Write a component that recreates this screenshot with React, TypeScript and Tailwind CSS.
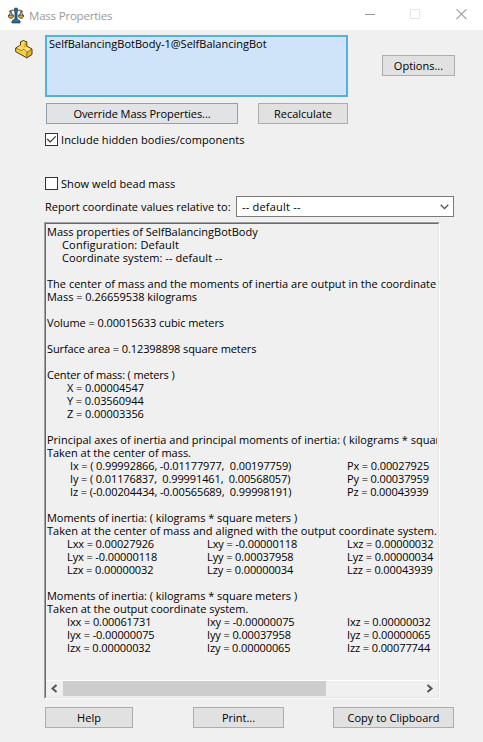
import type { ReactNode } from "react";

type Line = { text: string; style?: string };

const summary: Line[] = [
  { text: "Mass properties of SelfBalancingBotBody" },
  { text: "Configuration: Default", style: "pl-[15px] tracking-[0.17px]" },
  { text: "Coordinate system: -- default --", style: "pl-[15px] tracking-[0.07px]" },
  { text: "" },
  { text: "The center of mass and the moments of inertia are output in the coordinate system", style: "tracking-[0.015px]" },
  { text: "Mass = 0.26659538 kilograms", style: "tracking-[-0.03px]" },
  { text: "" },
  { text: "Volume = 0.00015633 cubic meters", style: "tracking-[-0.07px]" },
  { text: "" },
  { text: "Surface area = 0.12398898 square meters", style: "tracking-[-0.1px]" },
  { text: "" },
  { text: "Center of mass: ( meters )", style: "tracking-[-0.15px]" },
  { text: "X = 0.00004547", style: "pl-5 tracking-[-0.07px]" },
  { text: "Y = 0.03560944", style: "pl-5 tracking-[-0.07px]" },
  { text: "Z = 0.00003356", style: "pl-5 tracking-[-0.07px]" },
  { text: "" },
  { text: "Principal axes of inertia and principal moments of inertia: ( kilograms * square meters )" },
  { text: "Taken at the center of mass.", style: "tracking-[-0.03px]" },
];

const principal = [
  ["Ix = ( 0.99992866, -0.01177977,  0.00197759)", "Px = 0.00027925"],
  ["Iy = ( 0.01176837,  0.99991461,  0.00568057)", "Py = 0.00037959"],
  ["Iz = (-0.00204434, -0.00565689,  0.99998191)", "Pz = 0.00043939"],
];

const centerMoments = [
  ["Lxx = 0.00027926", "Lxy = -0.00000118", "Lxz = 0.00000032"],
  ["Lyx = -0.00000118", "Lyy = 0.00037958", "Lyz = 0.00000034"],
  ["Lzx = 0.00000032", "Lzy = 0.00000034", "Lzz = 0.00043939"],
];

const outputMoments = [
  ["Ixx = 0.00061731", "Ixy = -0.00000075", "Ixz = 0.00000032"],
  ["Iyx = -0.00000075", "Iyy = 0.00037958", "Iyz = 0.00000065"],
  ["Izx = 0.00000032", "Izy = 0.00000065", "Izz = 0.00077744"],
];

function TextLine({ text, style = "" }: Line) {
  return <div className={`h-[13px] whitespace-pre ${style}`}>{text}</div>;
}

function Matrix({ rows }: { rows: string[][] }) {
  return (
    <div className="grid grid-cols-[140px_140px_140px] pl-5 tracking-[-0.11px]">
      {rows.flat().map((cell) => (
        <div key={cell} className="h-[13px] whitespace-pre">{cell}</div>
      ))}
    </div>
  );
}

function Button({ children, className }: { children: ReactNode; className: string }) {
  return (
    <button className={`flex h-[21px] shrink-0 items-center justify-center border whitespace-pre ${className}`}>
      {children}
    </button>
  );
}

function CheckBox({ label, checked = false }: { label: string; checked?: boolean }) {
  return (
    <label className="flex h-[13px] items-center gap-[3px]">
      <span className="size-[13px] shrink-0 border border-[#333] bg-white">
        {checked && (
          <svg viewBox="0 0 11 11" className="block size-[11px]">
            <path d="M1.2 5 4.2 8 9.8 2.4" fill="none" stroke="#333" strokeWidth="1.2" />
          </svg>
        )}
      </span>
      <span className="tracking-[0.06px] whitespace-pre">{label}</span>
    </label>
  );
}

function ScaleIcon() {
  return (
    <svg viewBox="0 0 16 17" className="h-[17px] w-4 shrink-0">
      <path d="M1 4.5 3.3 3.4 8 3l4.7.4L15 4.5M2.8 4 1 9.5M2.8 4l2 5.5M13.2 4l-2 5.5M13.2 4l2 5.5" fill="none" stroke="#3b3a35" strokeWidth=".9" />
      <path d="M.5 8h5v1.9L4 11.2H1.8L.5 9.9ZM10.5 8h5v1.9l-1.3 1.3H12l-1.5-1.3Z" fill="#dda339" stroke="#443620" strokeWidth=".8" />
      <path d="M6.7 1.2h2.6v3L9 6v6l3 2v1.9H4V14l3-2V6l-.3-1.8Z" fill="#2b6e99" stroke="#123d57" strokeWidth=".8" />
    </svg>
  );
}

function PartIcon() {
  return (
    <svg viewBox="0 0 18 19" className="block h-[19px] w-[18px]">
      <path d="M.7 8 5.5 5V1.8L8.2.6l3.6 1.2v4.4L17 9v5.5l-5.2 3.4L.7 11.6Z" fill="#f9cf3a" />
      <path d="M5.5 1.8 8.2.6l3.6 1.2L9 3.1ZM.7 8l4.8-3v2.6L9 9.2l2.8-3L17 9l-5.2 3.2Z" fill="#ffe27a" />
      <path d="M5.5 1.8 9 3.1v6L5.5 7.6Z" fill="#fbd549" />
      <path d="m9 3.1 2.8-1.3v4.4L9 7.8ZM11.8 12.2 17 9v5.5l-5.2 3.4Z" fill="#e6b32a" />
      <path d="M.7 8 5.5 5V1.8L8.2.6l3.6 1.2v4.4L17 9v5.5l-5.2 3.4L.7 11.6Z" fill="none" stroke="#4b3b0c" strokeLinejoin="round" />
      <path d="m.7 8 5.8 2.6 2.5-1.5 2.8 3.1L17 9M11.8 12.2v5.7" fill="none" stroke="#6b5414" strokeWidth=".7" />
    </svg>
  );
}

export default function App() {
  return (
    <main className="flex h-[742px] w-[483px] flex-col bg-[#f0f0f0] font-['Open_Sans','Noto_Sans',sans-serif] text-[11px] leading-[13px] text-black">
      <header className="flex h-[30px] shrink-0 items-center bg-white pl-2">
        <ScaleIcon />
        <h1 className="ml-[5px] text-[11.5px] tracking-[-0.2px] text-[#999]">Mass Properties</h1>
        <svg viewBox="0 0 103 12" className="mr-[15px] ml-auto h-3 w-[103px]" fill="none">
          <path d="M0 5.5h10" stroke="#999" />
          <path d="M45.5.5h9v9h-9z" stroke="#e5e5e5" />
          <path d="m91.5.2 10 10m0-10-10 10" stroke="#999" strokeWidth="1.1" />
        </svg>
      </header>

      <section className="flex pt-[5px] pl-[15px]">
        <div className="w-[30px] pt-[5px]">
          <PartIcon />
        </div>
        <div className="w-[303px]">
          <div className="h-[62px] border-2 border-[#55b0e2] bg-[#cfe4f9] pl-[2px] whitespace-pre">
            SelfBalancingBotBody-1@SelfBalancingBot
          </div>
          <div className="mt-[6px] flex justify-between pl-px">
            <Button className="w-[192px] border-[#8fa1b0] bg-[#e1e3e6] tracking-[-0.07px]">Override Mass Properties...</Button>
            <Button className="w-[90px] border-[#adadad] bg-[#e1e1e1]">Recalculate</Button>
          </div>
        </div>
        <div className="pt-5 pl-[34px]">
          <Button className="w-[73px] border-[#adadad] bg-[#e1e1e1]">Options...</Button>
        </div>
      </section>

      <section className="pt-[9px] pl-[45px]">
        <CheckBox label="Include hidden bodies/components" checked />
        <div className="h-[31px]" />
        <CheckBox label="Show weld bead mass" />
        <div className="mt-[6px] flex items-center">
          <span className="w-[191px] whitespace-pre">Report coordinate values relative to:</span>
          <div className="flex h-[21px] w-[218px] items-center justify-between border border-[#7a7a7a] bg-white pr-1 pl-[5px]">
            <span className="tracking-[0.2px]">-- default --</span>
            <svg viewBox="0 0 9 6" className="h-[6px] w-[9px]">
              <path d="m.7.8 3.8 3.8L8.3.8" fill="none" stroke="#505050" strokeWidth="1.3" />
            </svg>
          </div>
        </div>
      </section>

      <section className="mt-[5px] ml-[44px] h-[477px] w-[396px] shrink-0 border border-t-[#a0a0a0] border-r-white border-b-white border-l-[#a0a0a0]">
        <div className="flex h-full flex-col border border-t-[#696969] border-r-[#e3e3e3] border-b-[#e3e3e3] border-l-[#696969]">
          <div className="min-h-0 flex-1 pr-px pl-px">
            <div className="h-full overflow-hidden pt-px">
              {summary.map((line, i) => (
                <TextLine key={i} {...line} />
              ))}
              <div className="grid grid-cols-[277px_120px] pl-[23px] tracking-[-0.12px]">
                {principal.flat().map((cell) => (
                  <div key={cell} className="h-[13px] whitespace-pre">{cell}</div>
                ))}
              </div>
              <TextLine text="" />
              <TextLine text="Moments of inertia: ( kilograms * square meters )" style="tracking-[-0.04px]" />
              <TextLine text="Taken at the center of mass and aligned with the output coordinate system." style="tracking-[0.04px]" />
              <Matrix rows={centerMoments} />
              <TextLine text="" />
              <TextLine text="Moments of inertia: ( kilograms * square meters )" style="tracking-[-0.04px]" />
              <TextLine text="Taken at the output coordinate system." />
              <Matrix rows={outputMoments} />
            </div>
          </div>
          <div className="flex h-[17px] shrink-0 items-center border-t border-white pb-px">
            <svg viewBox="0 0 17 15" className="h-[15px] w-[17px]">
              <path d="m10.5 4-4 3.5 4 3.5" fill="none" stroke="#555" strokeWidth="2" />
            </svg>
            <div className="h-[15px] w-[263px] bg-[#cdcdcd]" />
            <svg viewBox="0 0 17 15" className="ml-auto h-[15px] w-[17px]">
              <path d="m6.5 4 4 3.5-4 3.5" fill="none" stroke="#555" strokeWidth="2" />
            </svg>
          </div>
        </div>
      </section>

      <footer className="mt-2 ml-[45px] flex w-[409px]">
        <Button className="w-[88px] border-[#adadad] bg-[#e1e1e1]">Help</Button>
        <Button className="ml-[60px] w-[91px] border-[#adadad] bg-[#e1e1e1]">Print...</Button>
        <Button className="ml-auto w-[121px] border-[#adadad] bg-[#e1e1e1]">Copy to Clipboard</Button>
      </footer>
    </main>
  );
}
